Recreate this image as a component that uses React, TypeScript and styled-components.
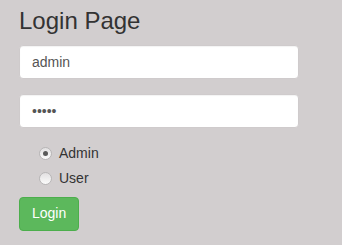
import styled, { createGlobalStyle } from "styled-components";

const GlobalStyle = createGlobalStyle`
  html, body {
    margin: 0;
    padding: 0;
    background: #d2cecf;
  }
  body {
    font-family: "Liberation Sans", Arial, sans-serif;
    font-size: 14px;
    color: #333;
  }
`;

const Page = styled.div`
  padding: 8px 0 0 19px;
  width: 280px;
`;

const Title = styled.h3`
  margin: 0 0 11px;
  font-size: 24px;
  font-weight: 400;
  line-height: 1.1;
  color: #333;
`;

const Field = styled.input`
  display: block;
  box-sizing: border-box;
  width: 280px;
  height: 34px;
  margin: 0 0 15px;
  padding: 6px 12px;
  font-family: inherit;
  font-size: 14px;
  line-height: 1.42857;
  color: #555;
  background: #fff;
  border: 1px solid #cfcbcc;
  border-radius: 4px;
  box-shadow: inset 0 1px 1px rgba(0, 0, 0, 0.05);
  outline: none;
`;

const Options = styled.div`
  display: flex;
  flex-direction: column;
  gap: 5px;
  padding-left: 20px;
  margin-top: 1px;
  margin-bottom: 9px;
`;

const Option = styled.label`
  display: flex;
  align-items: center;
  gap: 7px;
  height: 20px;
  line-height: 20px;
  font-size: 14px;
  color: #333;
  cursor: pointer;
`;

const Radio = styled.span<{ $checked?: boolean }>`
  position: relative;
  box-sizing: border-box;
  width: 13px;
  height: 13px;
  border-radius: 50%;
  border: 1px solid #b8b6b7;
  background: linear-gradient(#e2e0e1, #fbfbfb);
  margin-top: 1px;

  &::after {
    content: "";
    display: ${(p) => (p.$checked ? "block" : "none")};
    position: absolute;
    left: 3px;
    top: 3px;
    width: 5px;
    height: 5px;
    border-radius: 50%;
    background: #5a5a5a;
  }
`;

const LoginButton = styled.button`
  display: block;
  box-sizing: border-box;
  height: 34px;
  padding: 6px 12px;
  font-family: inherit;
  font-size: 14px;
  line-height: 1.42857;
  color: #fff;
  background: #5cb85c;
  border: 1px solid #4cae4c;
  border-radius: 4px;
  cursor: pointer;
`;

export default function App() {
  return (
    <>
      <GlobalStyle />
      <Page>
        <Title>Login Page</Title>
        <Field type="text" defaultValue="admin" />
        <Field type="password" defaultValue="admin" />
        <Options>
          <Option>
            <Radio $checked />
            Admin
          </Option>
          <Option>
            <Radio />
            User
          </Option>
        </Options>
        <LoginButton>Login</LoginButton>
      </Page>
    </>
  );
}
